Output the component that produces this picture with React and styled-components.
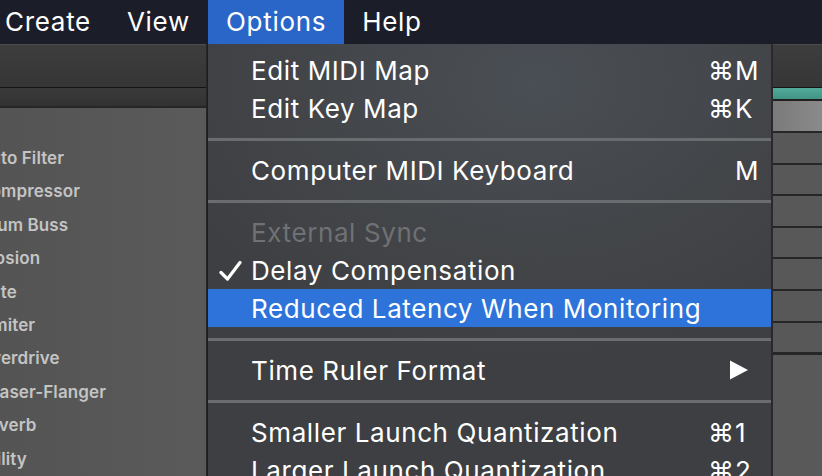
import React from 'react';
import styled, { createGlobalStyle } from 'styled-components';

const GlobalStyle = createGlobalStyle`
  html, body {
    margin: 0;
    padding: 0;
    background: #1c1f29;
    overflow: hidden;
  }
`;

const MENU_FONT = `'Inter', 'DejaVu Sans', sans-serif`;

const topMenus = ['Create', 'View', 'Options', 'Help'];

const browserItems = [
  'Auto Filter',
  'Compressor',
  'Drum Buss',
  'Erosion',
  'Gate',
  'Limiter',
  'Overdrive',
  'Phaser-Flanger',
  'Reverb',
  'Utility',
];

const menuEntries = [
  { label: 'Edit MIDI Map', mod: '⌘', key: 'M' },
  { label: 'Edit Key Map', mod: '⌘', key: 'K' },
  { separator: true },
  { label: 'Computer MIDI Keyboard', key: 'M' },
  { separator: true },
  { label: 'External Sync', disabled: true },
  { label: 'Delay Compensation', checked: true },
  { label: 'Reduced Latency When Monitoring', active: true },
  { separator: true },
  { label: 'Time Ruler Format', submenu: true },
  { separator: true },
  { label: 'Smaller Launch Quantization', mod: '⌘', key: '1' },
  { label: 'Larger Launch Quantization', mod: '⌘', key: '2' },
];

const CheckIcon = () => (
  <svg width="23" height="20" viewBox="0 0 23 20">
    <polyline
      points="2,11.5 8.5,18 21,1.5"
      fill="none"
      stroke="#fff"
      strokeWidth="3.2"
      strokeLinecap="round"
      strokeLinejoin="round"
    />
  </svg>
);

const SubmenuArrow = () => (
  <svg width="18" height="20" viewBox="0 0 18 20">
    <polygon points="0,0.5 18,10 0,19.5" fill="#fff" />
  </svg>
);

const App = () => {
  return (
    <Screen>
      <GlobalStyle />
      <MenuBar>
        {topMenus.map((name) => (
          <TopMenu key={name} active={name === 'Options'}>
            {name}
          </TopMenu>
        ))}
      </MenuBar>
      <Workspace>
        <Browser>
          <PanelHeader />
          <PanelStrip />
          <BrowserList>
            {browserItems.map((item) => (
              <BrowserItem key={item}>{item}</BrowserItem>
            ))}
          </BrowserList>
        </Browser>
        <Arrangement />
        <TrackColumn>
          <PanelHeader />
          <TealBar />
          <ClipCell light />
          {Array.from({ length: 7 }).map((_, i) => (
            <ClipCell key={i} thick={i === 6} />
          ))}
          <TrackRest />
        </TrackColumn>
      </Workspace>

      {/* open Options menu, drawn over the workspace */}
      <Dropdown>
        {menuEntries.map((entry, i) =>
          entry.separator ? (
            <Separator key={i} />
          ) : (
            <MenuRow key={i} active={entry.active} disabled={entry.disabled}>
              <CheckSlot>{entry.checked && <CheckIcon />}</CheckSlot>
              <Label>{entry.label}</Label>
              {entry.submenu ? (
                <ArrowSlot>
                  <SubmenuArrow />
                </ArrowSlot>
              ) : (
                entry.key && (
                  <Shortcut>
                    <Modifier>{entry.mod}</Modifier>
                    <Key>{entry.key}</Key>
                  </Shortcut>
                )
              )}
            </MenuRow>
          )
        )}
      </Dropdown>
    </Screen>
  );
};

const Screen = styled.div`
  position: relative;
  width: 822px;
  height: 476px;
  overflow: hidden;
  display: flex;
  flex-direction: column;
  background: #1c1f29;
`;
const MenuBar = styled.nav`
  height: 44px;
  flex: none;
  display: flex;
  background: #1b1e28;
  & > :first-child {
    margin-left: -13px;
  }
`;
const TopMenu = styled.div`
  padding: 0 18px;
  line-height: 44px;
  font-family: ${MENU_FONT};
  font-size: 26px;
  letter-spacing: 0.7px;
  color: #fff;
  background: ${({ active }) => (active ? '#2a66c8' : 'transparent')};
`;
const Workspace = styled.div`
  flex: 1;
  display: flex;
  min-height: 0;
`;
const Browser = styled.aside`
  width: 206px;
  flex: none;
  display: flex;
  flex-direction: column;
  border-right: 1px solid #262626;
  overflow: hidden;
`;
const PanelHeader = styled.div`
  height: 42px;
  flex: none;
  border-top: 1px solid #4c4c4c;
  border-bottom: 1px solid #141414;
  background: linear-gradient(to bottom, #3d3d3d, #363636);
`;
const PanelStrip = styled.div`
  height: 18px;
  flex: none;
  border-bottom: 2px solid #262626;
  background: linear-gradient(to bottom, #3a3a3a, #323232);
`;
const BrowserList = styled.ul`
  flex: 1;
  margin: 0;
  padding: 33px 0 0;
  list-style: none;
  background: linear-gradient(to right, #545454, #5a5a5a);
`;
const BrowserItem = styled.li`
  height: 33.4px;
  line-height: 34px;
  margin-left: -22px;
  white-space: nowrap;
  font-family: 'Inter', sans-serif;
  font-weight: 600;
  font-size: 17px;
  letter-spacing: 0.1px;
  color: #c4c4c4;
`;
const Arrangement = styled.main`
  flex: 1;
  background: #404040;
`;
const TrackColumn = styled.aside`
  width: 49px;
  flex: none;
  display: flex;
  flex-direction: column;
  border-left: 2px solid #2a2a2a;
`;
const TealBar = styled.div`
  height: 11px;
  flex: none;
  border-bottom: 2px solid #202020;
  background: linear-gradient(to bottom, #52ab9a, #409484);
`;
const ClipCell = styled.div`
  height: ${({ light }) => (light ? '30px' : '29.6px')};
  flex: none;
  border-bottom: ${({ thick }) => (thick ? '3px' : '2px')} solid #262626;
  background: ${({ light }) =>
    light ? 'linear-gradient(to right, #7a7a7a, #8a8a8a)' : '#585858'};
`;
const TrackRest = styled.div`
  flex: 1;
  background: #595959;
`;
const Dropdown = styled.div`
  position: absolute;
  left: 207px;
  top: 44px;
  width: 563px;
  bottom: -40px;
  padding-top: 7px;
  border-left: 1px solid #1e1e1e;
  background: radial-gradient(
    ellipse 70% 60% at 58% 8%,
    #4a4f55 0%,
    #44474b 45%,
    #3e3f42 100%
  );
  font-family: ${MENU_FONT};
  font-size: 26px;
  letter-spacing: 0.6px;
`;
const MenuRow = styled.div`
  height: 38px;
  display: flex;
  align-items: center;
  color: ${({ disabled }) => (disabled ? '#6f7174' : '#fff')};
  background: ${({ active }) => (active ? '#2e73da' : 'transparent')};
`;
const CheckSlot = styled.span`
  width: 43px;
  flex: none;
  display: flex;
  align-items: center;
  padding-left: 11px;
  box-sizing: border-box;
  margin-top: 1px;
`;
const Label = styled.span`
  flex: 1;
  white-space: nowrap;
`;
const Shortcut = styled.span`
  display: flex;
  padding-right: 12px;
`;
const Modifier = styled.span`
  width: 27px;
`;
const Key = styled.span`
  width: 24px;
`;
const ArrowSlot = styled.span`
  display: flex;
  padding-right: 23px;
`;
const Separator = styled.div`
  height: 24px;
  display: flex;
  align-items: center;
  &::before {
    content: '';
    flex: 1;
    height: 3px;
    background: #6a6d70;
  }
`;

export default App;
